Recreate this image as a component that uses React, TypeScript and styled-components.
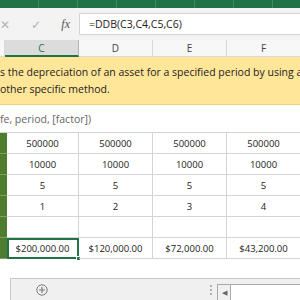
import React from 'react';
import styled, { createGlobalStyle } from 'styled-components';

const GlobalStyle = createGlobalStyle`
    html, body {
        margin: 0;
        padding: 0;
        background: #ffffff;
    }
    body {
        font-family: "Open Sans", "Noto Sans", sans-serif;
    }
`;

const Screen = styled.div`
    width: 300px;
    height: 300px;
    overflow: hidden;
    display: flex;
    flex-direction: column;
    background: #ffffff;
`;

const Ribbon = styled.div`
    height: 8px;
    flex: none;
    background: #217346;
    display: flex;
    span{
        width: 38px;
        border-right: 1px solid #3c8a5e;
    }
`;

const FormulaBar = styled.div`
    height: 32px;
    flex: none;
    background: #f3f3f3;
    display: flex;
    align-items: center;
`;

const FormulaTools = styled.div`
    width: 79px;
    display: flex;
    align-items: center;
    justify-content: space-between;
    padding: 0 9px 0 0;
    box-sizing: border-box;
    color: #b3b3b3;
    font-size: 12px;
    .fx{
        font-family: "Liberation Serif", serif;
        font-style: italic;
        color: #555;
        font-size: 12px;
    }
`;

const FormulaInput = styled.div`
    flex: 1;
    height: 20px;
    margin-right: -4px;
    background: #ffffff;
    border: 1px solid #d4d4d4;
    display: flex;
    align-items: center;
    padding-left: 9px;
    font-size: 10.5px;
    color: #222;
`;

const HeaderRow = styled.div`
    height: 17px;
    flex: none;
    display: grid;
    grid-template-columns: 5px 74px 74px 74px 74px;
    background: #f7f7f7;
`;

const ColHead = styled.div<{ $active?: boolean }>`
    display: flex;
    align-items: center;
    justify-content: center;
    font-size: 10px;
    color: ${p => p.$active ? '#217346' : '#444'};
    background: ${p => p.$active ? '#dcdcdc' : '#f7f7f7'};
    border-right: 1px solid ${p => p.$active ? '#b5b5b5' : '#d9d9d9'};
    border-bottom: ${p => p.$active ? '2px solid #217346' : '1px solid #d9d9d9'};
    box-sizing: border-box;
`;

const Tip = styled.div`
    height: 48px;
    flex: none;
    background: #ffe699;
    border-bottom: 1px solid #f2cf6e;
    box-sizing: border-box;
    padding-top: 7px;
    font-size: 10.5px;
    line-height: 17px;
    color: #222;
    white-space: nowrap;
    overflow: hidden;
`;

const Hint = styled.div`
    height: 27px;
    flex: none;
    display: flex;
    align-items: center;
    font-size: 10.5px;
    color: #666;
    white-space: nowrap;
`;

const Grid = styled.div`
    display: grid;
    grid-template-columns: 7px 72px 74px 74px 74px;
    grid-auto-rows: 21px;
    border-top: 1px solid #d4d4d4;
    flex: none;
`;

const RowHead = styled.div`
    background: #4e7d30;
    border-bottom: 1px solid #7ea25f;
`;

const Cell = styled.div<{ $selected?: boolean }>`
    position: relative;
    display: flex;
    align-items: center;
    justify-content: center;
    font-size: 9.5px;
    color: #222;
    border-right: 1px solid #d4d4d4;
    border-bottom: 1px solid #d4d4d4;
    box-sizing: border-box;
    ${p => p.$selected && `
        outline: 2px solid #217346;
        outline-offset: -2px;
    `}
`;

const Handle = styled.span`
    position: absolute;
    right: -3px;
    bottom: -3px;
    width: 5px;
    height: 5px;
    background: #217346;
    border: 1px solid #ffffff;
    box-sizing: border-box;
`;

const Spacer = styled.div`
    flex: 1;
`;

const TabBar = styled.div`
    height: 22px;
    flex: none;
    background: #f0f0f0;
    border-top: 1px solid #c8c8c8;
    box-sizing: border-box;
    display: flex;
    align-items: stretch;
`;

const ActiveTab = styled.div`
    width: 10px;
    background: #ffffff;
    border-right: 1px solid #c8c8c8;
    margin-top: -1px;
`;

const AddSheet = styled.div`
    width: 36px;
    margin-left: 25px;
    display: flex;
    align-items: center;
    color: #7a7a7a;
`;

const Splitter = styled.div`
    margin-left: auto;
    width: 13px;
    display: flex;
    flex-direction: column;
    justify-content: center;
    align-items: center;
    gap: 2px;
    span{
        width: 2px;
        height: 2px;
        background: #b0b0b0;
    }
`;

const Scroll = styled.div`
    width: 82px;
    margin-top: 5px;
    display: flex;
    border: 1px solid #ababab;
    border-right: none;
    border-bottom: none;
    background: #ffffff;
`;

const ScrollArrow = styled.div`
    width: 12px;
    border-right: 1px solid #ababab;
    background: #f0f0f0;
    display: flex;
    align-items: center;
    justify-content: center;
    font-size: 7px;
    color: #666;
`;

const rows = [
    ['500000', '500000', '500000', '500000'],
    ['10000', '10000', '10000', '10000'],
    ['5', '5', '5', '5'],
    ['1', '2', '3', '4'],
    ['', '', '', ''],
    ['$200,000.00', '$120,000.00', '$72,000.00', '$43,200.00'],
];

const App = () => {
    return (
        <Screen>
            <GlobalStyle />
            <Ribbon>
                <span /><span /><span /><span /><span /><span /><span />
            </Ribbon>
            <FormulaBar>
                <FormulaTools>
                    <span>✕</span>
                    <span>✓</span>
                    <span className='fx'>fx</span>
                </FormulaTools>
                <FormulaInput>=DDB(C3,C4,C5,C6)</FormulaInput>
            </FormulaBar>
            <HeaderRow>
                <ColHead />
                <ColHead $active>C</ColHead>
                <ColHead>D</ColHead>
                <ColHead>E</ColHead>
                <ColHead>F</ColHead>
            </HeaderRow>
            <Tip>
                <div>s the depreciation of an asset for a specified period by using a</div>
                <div>other specific method.</div>
            </Tip>
            <Hint>fe, period, [factor])</Hint>
            <Grid>
                {rows.map((row, r) => (
                    <React.Fragment key={r}>
                        <RowHead />
                        {row.map((v, c) => {
                            const selected = r === rows.length - 1 && c === 0;
                            return (
                                <Cell key={c} $selected={selected}>
                                    {v}
                                    {selected && <Handle />}
                                </Cell>
                            );
                        })}
                    </React.Fragment>
                ))}
            </Grid>
            <Spacer />
            <TabBar>
                <ActiveTab />
                <AddSheet>
                    <svg width='12' height='12' viewBox='0 0 12 12'>
                        <circle cx='6' cy='6' r='5.2' fill='none' stroke='currentColor' strokeWidth='1' />
                        <path d='M6 3v6M3 6h6' stroke='currentColor' strokeWidth='1.2' />
                    </svg>
                </AddSheet>
                <Splitter>
                    <span /><span /><span />
                </Splitter>
                <Scroll>
                    <ScrollArrow>◀</ScrollArrow>
                </Scroll>
            </TabBar>
        </Screen>
    );
};

export default App;
